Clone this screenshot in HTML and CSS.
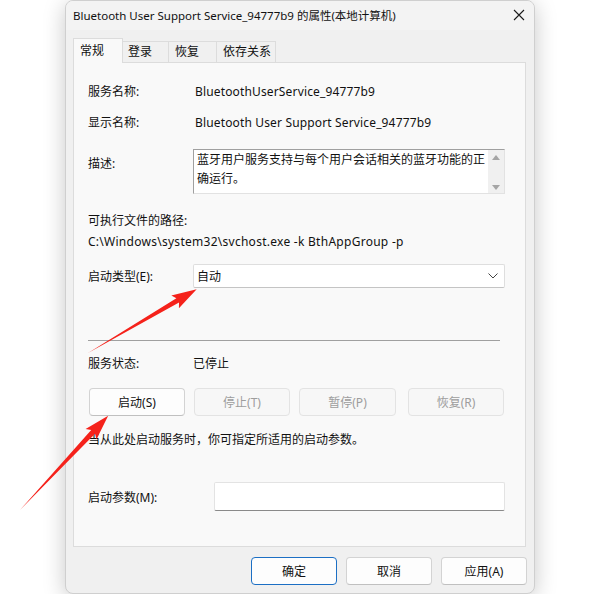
FILE: index.html
```html
<!DOCTYPE html>
<html lang="zh-CN">
<head>
  <meta charset="UTF-8" />
  <title>Bluetooth User Support Service_94777b9 的属性(本地计算机)</title>
  <link rel="stylesheet" href="styles.css">
</head>
<body>
  <div class="window">
    <div class="titlebar">
      <span class="title">Bluetooth User Support Service_94777b9 的属性(本地计算机)</span>
      <svg class="close" width="12" height="12" viewBox="0 0 12 12">
        <path d="M1 1 L11 11 M11 1 L1 11" stroke="#1a1a1a" stroke-width="1.1" fill="none" />
      </svg>
    </div>

    <div class="body">
      <div class="tabs">
        <div class="tab active">常规</div>
        <div class="tab t-login">登录</div>
        <div class="tab t-recover">恢复</div>
        <div class="tab t-deps">依存关系</div>
      </div>

      <div class="panel">
        <div class="row row-name">
          <span class="label">服务名称:</span>
          <span class="value">BluetoothUserService_94777b9</span>
        </div>
        <div class="row row-display">
          <span class="label">显示名称:</span>
          <span class="value">Bluetooth User Support Service_94777b9</span>
        </div>
        <div class="row row-desc">
          <span class="label">描述:</span>
          <div class="memo">
            <div class="memo-text">蓝牙用户服务支持与每个用户会话相关的蓝牙功能的正确运行。</div>
            <div class="memo-scroll">
              <span class="tri up"></span>
              <span class="tri down"></span>
            </div>
          </div>
        </div>
        <div class="path-label">可执行文件的路径:</div>
        <div class="path-value">C:\Windows\system32\svchost.exe -k BthAppGroup -p</div>
        <div class="row row-type">
          <span class="label">启动类型(E):</span>
          <div class="combo">
            <span>自动</span>
            <svg width="10" height="6" viewBox="0 0 10 6">
              <path d="M0.5 0.5 L5 5 L9.5 0.5" stroke="#444" stroke-width="1" fill="none" />
            </svg>
          </div>
        </div>

        <div class="divider"></div>

        <div class="row row-status">
          <span class="label">服务状态:</span>
          <span>已停止</span>
        </div>
        <div class="svc-buttons">
          <button class="btn">启动(S)</button>
          <button class="btn" disabled>停止(T)</button>
          <button class="btn wide" disabled>暂停(P)</button>
          <button class="btn last" disabled>恢复(R)</button>
        </div>
        <div class="hint">当从此处启动服务时，你可指定所适用的启动参数。</div>
        <div class="row row-params">
          <span class="label label-wide">启动参数(M):</span>
          <div class="field"></div>
        </div>
      </div>

      <div class="actions">
        <button class="btn dlg default">确定</button>
        <button class="btn dlg">取消</button>
        <button class="btn dlg">应用(A)</button>
      </div>
    </div>
  </div>

  <svg class="arrows" width="600" height="595" viewBox="0 0 600 595">
    <polygon transform="translate(88 353) rotate(-30.4)" points="0,0 104,-2.6 101,-7.5 126,0 101,7.5 104,2.6" fill="#f5221b" />
    <polygon transform="translate(20 510) rotate(-46.9)" points="0,0 107,-2.6 104,-7.5 129,0 104,7.5 107,2.6" fill="#f5221b" />
  </svg>
</body>
</html>
```

FILE: styles.css
```css
body { margin: 0; background: #fff; font-family: "Noto Sans", "Noto Sans CJK SC", sans-serif; font-size: 12px; color: #111; }

.window { margin-left: 65px; width: 470px; height: 594px; box-sizing: border-box; border: 1px solid #cfcfcf; border-radius: 8px; background: #f0f0f0; box-shadow: 0 4px 22px rgba(0, 0, 0, 0.22); overflow: hidden; }

.titlebar { height: 29px; display: flex; align-items: center; justify-content: space-between; padding: 0 9px 0 7px; background: #f3f3f3; }
.title { line-height: 29px; font-size: 11.5px; }
.close { display: block; margin-top: -2px; }

.body { padding: 8px 8px 0 7px; }

/* tab widths follow the native control, which sizes them unevenly */
.tabs { display: flex; align-items: flex-end; height: 24px; }
.tab { height: 21px; line-height: 20px; box-sizing: border-box; padding-left: 5px; border: 1px solid #dcdcdc; border-left: none; border-bottom: none; background: #f0f0f0; }
.tab.active { width: 50px; height: 25px; line-height: 24px; padding-left: 6px; border-left: 1px solid #dcdcdc; margin-bottom: -1px; position: relative; z-index: 1; background: #f9f9f9; }
.t-login { width: 46px; }
.t-recover { width: 48px; padding-left: 6px; }
.t-deps { width: 59px; padding-left: 6px; }

.panel { height: 485px; box-sizing: border-box; border: 1px solid #dcdcdc; background: #f9f9f9; padding: 0 20px 0 14px; }

.row { display: flex; align-items: center; }
.label { width: 105px; flex: none; }
.label-wide { width: 126px; }
.value { padding-left: 2px; letter-spacing: 0.15px; }

.row-name { margin-top: 21px; line-height: 16px; }
.row-display { margin-top: 15px; line-height: 16px; }
.row-desc { margin-top: 18px; align-items: flex-start; }
.row-desc .label { padding-top: 7px; line-height: 16px; }

.memo { width: 312px; height: 45px; box-sizing: border-box; display: flex; background: #fff; border: 1px solid #e2e2e2; border-top-color: #a0a0a0; border-left-color: #a0a0a0; }
.memo-text { flex: 1; padding: 0 2px 0 3px; line-height: 19px; }
.memo-scroll { width: 16px; flex: none; background: #f0f0f0; display: flex; flex-direction: column; justify-content: space-between; align-items: center; padding: 5px 0 3px; box-sizing: border-box; }
.tri { width: 0; height: 0; border-left: 4px solid transparent; border-right: 4px solid transparent; }
.tri.up { border-bottom: 5px solid #a5a5a5; }
.tri.down { border-top: 5px solid #a5a5a5; }

.path-label { margin-top: 19px; line-height: 16px; }
.path-value { margin-top: 5px; line-height: 16px; letter-spacing: 0.27px; }

.row-type { margin-top: 14px; }
.combo { width: 312px; height: 24px; box-sizing: border-box; display: flex; align-items: center; justify-content: space-between; padding: 0 6px 0 3px; background: #fff; border: 1px solid #dedede; border-bottom-color: #c4c4c4; border-radius: 2px; }

.divider { margin: 52px 5px 0 0; height: 1px; background: #a0a0a0; }

.row-status { margin-top: 15px; line-height: 16px; }

.svc-buttons { display: flex; gap: 9px; margin: 16px 0 0 1px; }
.btn { width: 96px; height: 28px; box-sizing: border-box; font: inherit; color: #111; background: #fdfdfd; border: 1px solid #d3d3d3; border-bottom-color: #c0c0c0; border-radius: 4px; padding: 0; }
.btn.wide { width: 97px; }
.btn.last { margin-left: 3px; }
.btn:disabled { background: #f7f7f7; border-color: #e3e3e3; color: #9d9d9d; }

.hint { margin-top: 16px; line-height: 16px; }

.row-params { margin-top: 34px; }
.field { width: 291px; height: 29px; box-sizing: border-box; background: #fff; border: 1px solid #e3e3e3; border-bottom-color: #8a8a8a; border-radius: 2px; }

.actions { display: flex; justify-content: flex-end; gap: 9px; margin: 10px -1px 0 0; }
.btn.dlg { width: 86px; }
.btn.default { border-color: #1c6fc4; }

.arrows { position: absolute; top: 0; left: 0; pointer-events: none; }
```
